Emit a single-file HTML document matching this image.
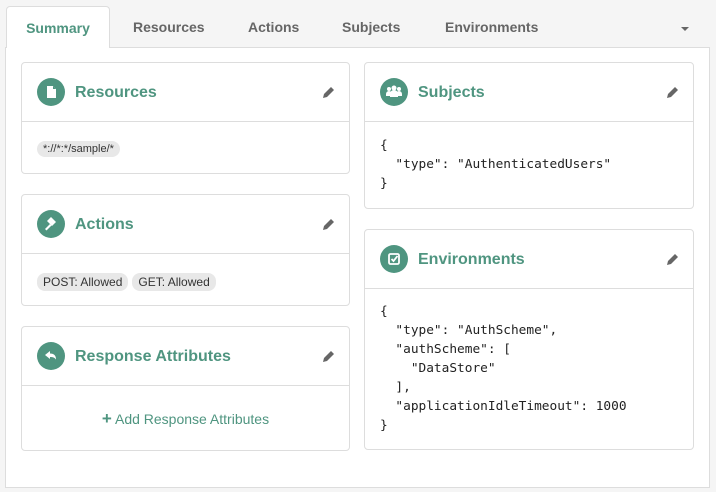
<!DOCTYPE html>
<html><head><meta charset="utf-8"><style>
*{box-sizing:border-box;margin:0;padding:0}
body{width:716px;height:492px;background:#f5f5f5;font-family:"Liberation Sans",sans-serif;position:relative;overflow:hidden}
.tabs{position:absolute;left:0;top:0;width:716px;height:48px}
.tab{position:absolute;top:19px;font-size:14px;font-weight:bold;color:#666}
.active{position:absolute;left:6px;top:6px;width:104px;height:42px;background:#fff;border:1px solid #ddd;border-bottom:none;border-radius:4px 4px 0 0;color:#4f9580;font-size:14px;font-weight:bold;text-align:center;padding-top:13px;z-index:2}
.panel{position:absolute;left:5px;top:47px;width:705px;height:441px;background:#fff;border:1px solid #ddd}
.card{position:absolute;background:#fff;border:1px solid #ddd;border-radius:4px}
.hd{height:59px;border-bottom:1px solid #ddd;position:relative}
.ic{position:absolute;left:15px;top:15px;width:28px;height:28px;border-radius:50%;background:#4f9580}
.ic svg{position:absolute;left:0;top:0}
.tt{position:absolute;left:53px;top:21px;font-size:16px;font-weight:bold;color:#4f9580}
.pen{position:absolute;right:14px;top:23px}
.pill{display:inline-block;background:#e8e8e8;border-radius:8px;font-size:12px;color:#333;padding:2px 6px;margin-right:4px}
pre{font-family:"DejaVu Sans Mono","Liberation Mono",monospace;font-size:12.8px;line-height:19px;color:#222}
</style></head><body>
<div class="tabs">
<div class="active">Summary</div>
<div class="tab" style="left:133px">Resources</div>
<div class="tab" style="left:248px">Actions</div>
<div class="tab" style="left:342px">Subjects</div>
<div class="tab" style="left:445px">Environments</div>
<div style="position:absolute;left:681px;top:27px;border:4px solid transparent;border-top:4px solid #666;border-bottom:none"></div>
</div>
<div class="panel"></div>

<div class="card" style="left:21px;top:62px;width:329px;height:112px">
<div class="hd"><div class="ic"><svg width="28" height="28"><path d="M10 8h6l3 3v9h-9z" fill="#fff"/><path d="M16 8v3h3" fill="#4f9580"/></svg></div><div class="tt">Resources</div>
<svg class="pen" width="14" height="14"><path d="M2 12l1-4 7-7 3 3-7 7z" fill="#666"/></svg></div>
<div style="padding:17px 15px"><span class="pill" style="font-size:11px">*://*:*/sample/*</span></div>
</div>

<div class="card" style="left:21px;top:194px;width:329px;height:112px">
<div class="hd"><div class="ic"><svg width="28" height="28"><path d="M10 11l4-4 5 5-4 4z" fill="#fff"/><path d="M13 14l-5 5 1.5 1.5 5-5z" fill="#fff"/></svg></div><div class="tt">Actions</div>
<svg class="pen" width="14" height="14"><path d="M2 12l1-4 7-7 3 3-7 7z" fill="#666"/></svg></div>
<div style="padding:19px 15px"><span class="pill">POST: Allowed</span><span class="pill">GET: Allowed</span></div>
</div>

<div class="card" style="left:21px;top:326px;width:329px;height:125px">
<div class="hd"><div class="ic"><svg width="28" height="28"><path d="M8 13l5-4v2.5c4 0 6 2 6 6-1.5-2-3-2.5-6-2.5V17z" fill="#fff"/></svg></div><div class="tt">Response Attributes</div>
<svg class="pen" width="14" height="14"><path d="M2 12l1-4 7-7 3 3-7 7z" fill="#666"/></svg></div>
<div style="text-align:center;padding-top:23px;font-size:14px;color:#4f9580"><b style="font-size:17px">+</b> Add Response Attributes</div>
</div>

<div class="card" style="left:364px;top:62px;width:330px;height:147px">
<div class="hd"><div class="ic"><svg width="28" height="28"><circle cx="14" cy="10" r="2.5" fill="#fff"/><circle cx="9" cy="11" r="2" fill="#fff"/><circle cx="19" cy="11" r="2" fill="#fff"/><path d="M10 19v-3a4 4 0 018 0v3z M6 18v-2a3 3 0 016 0v2z M16 18v-2a3 3 0 016 0v2z" fill="#fff"/></svg></div><div class="tt">Subjects</div>
<svg class="pen" width="14" height="14"><path d="M2 12l1-4 7-7 3 3-7 7z" fill="#666"/></svg></div>
<pre style="padding:14px 15px">{
  "type": "AuthenticatedUsers"
}</pre>
</div>

<div class="card" style="left:364px;top:229px;width:330px;height:221px">
<div class="hd"><div class="ic"><svg width="28" height="28"><rect x="9" y="9" width="10" height="10" rx="1.5" fill="none" stroke="#fff" stroke-width="1.8"/><path d="M11.5 14l2 2 4-5" fill="none" stroke="#fff" stroke-width="1.8"/></svg></div><div class="tt">Environments</div>
<svg class="pen" width="14" height="14"><path d="M2 12l1-4 7-7 3 3-7 7z" fill="#666"/></svg></div>
<pre style="padding:13px 15px">{
  "type": "AuthScheme",
  "authScheme": [
    "DataStore"
  ],
  "applicationIdleTimeout": 1000
}</pre>
</div>
</body></html>
